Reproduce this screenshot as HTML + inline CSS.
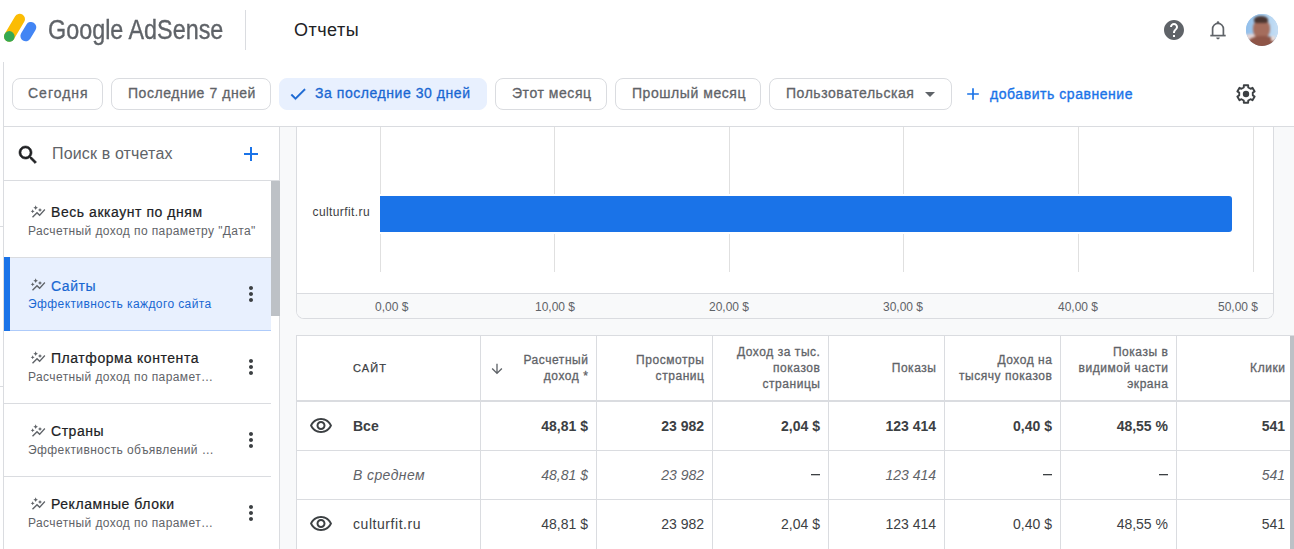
<!DOCTYPE html>
<html><head><meta charset="utf-8">
<style>
*{box-sizing:border-box;margin:0;padding:0}
html,body{width:1294px;height:549px;overflow:hidden;background:#fff;font-family:"Liberation Sans",sans-serif;color:#3c4043}
.a{position:absolute}
.t{position:absolute;white-space:nowrap;line-height:1}
svg{display:block}
.chip{position:absolute;top:78px;height:32px;border:1px solid #dadce0;border-radius:8px;background:#fff}
.chip .t{top:7px;font-size:14px;letter-spacing:0.55px;-webkit-text-stroke-width:0.3px;color:#5f6368}
.vline{position:absolute;width:1px;background:#dadce0}
.hline{position:absolute;height:1px;background:#dadce0}
</style></head><body>

<!-- header -->
<div class="a" style="left:0;top:0;width:1294px;height:62px;background:#fff"></div>
<svg class="a" style="left:0;top:0" width="44" height="50" viewBox="0 0 44 50">
  <line x1="9.3" y1="36.4" x2="19.7" y2="19.1" stroke="#fbbc04" stroke-width="10.6" stroke-linecap="round"/>
  <line x1="25.7" y1="36" x2="31" y2="27.2" stroke="#4285f4" stroke-width="10.6" stroke-linecap="round"/>
  <circle cx="9.3" cy="36.4" r="5.3" fill="#34a853"/>
</svg>
<div class="t" style="left:48px;top:17px;font-size:27px;color:#5f6368;-webkit-text-stroke:0.35px #5f6368;transform:scaleX(0.865);transform-origin:0 0">Google AdSense</div>
<div class="vline" style="left:245px;top:10px;height:40px"></div>
<div class="t" style="left:294px;top:21px;font-size:18px;letter-spacing:0.5px;color:#202124">Отчеты</div>

<!-- help -->
<svg class="a" style="left:1162px;top:18px" width="24" height="24" viewBox="0 0 24 24"><path fill="#5f6368" d="M12 2C6.48 2 2 6.48 2 12s4.48 10 10 10 10-4.48 10-10S17.52 2 12 2zm1 17h-2v-2h2v2zm2.07-7.75l-.9.92C13.45 12.9 13 13.5 13 15h-2v-.5c0-1.1.45-2.1 1.170-2.83l1.24-1.26c.37-.36.59-.86.59-1.41 0-1.1-.9-2-2-2s-2 .9-2 2H8c0-2.21 1.79-4 4-4s4 1.79 4 4c0 .88-.36 1.68-.93 2.25z"/></svg>
<!-- bell -->
<svg class="a" style="left:1206px;top:18px" width="24" height="24" viewBox="0 0 24 24"><g fill="none" stroke="#5f6368" stroke-width="1.7"><path d="M4.3 17.6H19.7"/><path d="M6.6 17.6V10.8A5.4 5.4 0 0 1 17.4 10.8V17.6"/></g><circle cx="12" cy="4.6" r="1.3" fill="#5f6368"/><path d="M10.2 19.6h3.6a1.8 1.8 0 0 1-3.6 0z" fill="#5f6368"/></svg>
<!-- avatar -->
<div class="a" style="left:1246px;top:14px;width:32px;height:32px;border-radius:50%;overflow:hidden;background:#a9cdee">
  <div class="a" style="left:-4px;top:-4px;width:40px;height:40px;filter:blur(0.9px)">
    <div class="a" style="left:0;top:0;width:40px;height:30px;background:linear-gradient(90deg,#8dbbe9,#a8cff0 50%,#cfe3f6)"></div>
    <div class="a" style="left:2px;top:24px;width:14px;height:10px;background:#e3d3d3;border-radius:40%"></div>
    <div class="a" style="left:11px;top:9px;width:17px;height:20px;border-radius:45% 45% 45% 45%;background:#a56d5d"></div>
    <div class="a" style="left:12px;top:6px;width:14px;height:7px;border-radius:50% 50% 30% 30%;background:#4b3530"></div>
    <div class="a" style="left:6px;top:26px;width:29px;height:16px;border-radius:45% 45% 0 0;background:#8e5547"></div>
    <div class="a" style="left:29px;top:26px;width:4px;height:5px;background:#e8dcd9"></div>
  </div>
</div>
<!-- left border of content -->
<div class="hline" style="left:0;top:226px;width:3px"></div>
<div class="hline" style="left:0;top:386px;width:3px"></div>
<div class="vline" style="left:3px;top:62px;height:487px"></div>

<!-- chips -->
<div class="chip" style="left:12px;width:91px"><div class="t" style="left:15px;letter-spacing:1px">Сегодня</div></div>
<div class="chip" style="left:111px;width:160px"><div class="t" style="left:16px">Последние 7 дней</div></div>
<div class="chip" style="left:279px;width:208px;border-color:#e8f0fe;background:#e8f0fe">
  <svg class="a" style="left:8px;top:5px" width="20" height="20" viewBox="0 0 24 24"><path fill="#1967d2" stroke="#1967d2" stroke-width="0.5" d="M9 16.17L4.83 12l-1.42 1.41L9 19 21 7l-1.41-1.41z"/></svg>
  <div class="t" style="left:35px;color:#1967d2">За последние 30 дней</div>
</div>
<div class="chip" style="left:495px;width:112px"><div class="t" style="left:16px">Этот месяц</div></div>
<div class="chip" style="left:615px;width:146px"><div class="t" style="left:16px">Прошлый месяц</div></div>
<div class="chip" style="left:769px;width:183px"><div class="t" style="left:16px">Пользовательская</div>
  <svg class="a" style="left:148px;top:3px" width="24" height="24" viewBox="0 0 24 24"><path fill="#5f6368" d="M7 10l5 5 5-5z"/></svg>
</div>
<svg class="a" style="left:963px;top:84px" width="20" height="20" viewBox="0 0 24 24"><path fill="#1a73e8" d="M19 13h-6v6h-2v-6H5v-2h6V5h2v6h6v2z"/></svg>
<div class="t" style="left:990px;top:87px;font-size:14px;letter-spacing:0.55px;-webkit-text-stroke-width:0.35px;color:#1a73e8">добавить сравнение</div>
<!-- gear -->
<svg class="a" style="left:1234px;top:82px" width="24" height="24" viewBox="0 0 24 24"><path fill="none" stroke="#3c4043" stroke-width="1.9" stroke-linejoin="round" d="M9.75 5.48 L9.82 3.27 L14.18 3.27 L14.25 5.48 L16.53 6.79 L18.47 5.75 L20.65 9.52 L18.77 10.68 L18.77 13.32 L20.65 14.48 L18.47 18.25 L16.53 17.21 L14.25 18.52 L14.18 20.73 L9.82 20.73 L9.75 18.52 L7.47 17.21 L5.53 18.25 L3.35 14.48 L5.23 13.32 L5.23 10.68 L3.35 9.52 L5.53 5.75 L7.47 6.79Z"/><circle cx="12" cy="12" r="3.2" fill="#3c4043"/></svg>

<div class="hline" style="left:3px;top:126px;width:1291px"></div>

<!-- main bg -->
<div class="a" style="left:280px;top:127px;width:1014px;height:422px;background:#f8f9fa"></div>

<!-- SIDEBAR -->
<div class="a" id="sidebar" style="left:4px;top:127px;width:275px;height:422px;background:#fff"></div>
<div class="vline" style="left:279px;top:127px;height:422px"></div>

<!-- search -->
<svg class="a" style="left:16px;top:143px" width="24" height="24" viewBox="0 0 24 24"><path fill="#202124" stroke="#202124" stroke-width="0.6" d="M15.5 14h-.79l-.28-.27C15.41 12.59 16 11.11 16 9.5 16 5.910 13.09 3 9.5 3S3 5.91 3 9.5 5.91 16 9.5 16c1.61 0 3.09-.59 4.23-1.57l.27.28v.79l5 4.99L20.490 19l-4.99-5zm-6 0C7.01 14 5 11.99 5 9.5S7.01 5 9.5 5 14 7.01 14 9.5 11.99 14 9.5 14z"/></svg>
<div class="t" style="left:52px;top:146px;font-size:16px;letter-spacing:0.15px;color:#5f6368">Поиск в отчетах</div>
<svg class="a" style="left:239px;top:142px" width="24" height="24" viewBox="0 0 24 24"><path fill="#1a73e8" d="M19 13h-6v6h-2v-6H5v-2h6V5h2v6h6v2z"/></svg>
<div class="hline" style="left:4px;top:180px;width:275px"></div>

<!-- items -->
<div class="hline" style="left:4px;top:257px;width:267px"></div>
<div class="a" style="left:4px;top:258px;width:267px;height:72px;background:#e8f0fe"></div>
<div class="a" style="left:4px;top:330px;width:267px;height:1px;background:#aecbfa"></div>
<div class="a" style="left:4px;top:257px;width:6px;height:74px;background:#1a73e8"></div>
<div class="hline" style="left:4px;top:403px;width:267px"></div>
<div class="hline" style="left:4px;top:476px;width:267px"></div>
<div class="a" style="left:271px;top:181px;width:9px;height:135px;background:#bdc1c6"></div>

<svg class="a ic" style="left:30px;top:204px" width="16" height="16" viewBox="0 0 24 24"><path fill="#5f6368" d="M14.06 9.94 12 9l2.06-.94L15 6l.94 2.06L18 9l-2.06.94L15 12l-.94-2.06zM4 14l.94-2.06L7 11l-2.06-.94L4 8l-.94 2.06L1 11l2.06.94L4 14zm4.5-5 1.09-2.41L12 5.5 9.59 4.41 8.5 2 7.41 4.41 5 5.5l2.41 1.09L8.5 9zm-4 11.5 6-6.01 4 4L23 8.93l-1.41-1.41-7.09 7.970-4-4L3 19l1.5 1.5z"/></svg>
<div class="t" style="left:51px;top:205px;font-size:14px;letter-spacing:0.55px;-webkit-text-stroke-width:0.2px;color:#202124">Весь аккаунт по дням</div>
<div class="t" style="left:28px;top:225px;font-size:12px;letter-spacing:0.4px;color:#5f6368">Расчетный доход по параметру "Дата"</div>

<svg class="a ic" style="left:30px;top:277px" width="16" height="16" viewBox="0 0 24 24"><path fill="#5f6368" d="M14.06 9.94 12 9l2.06-.94L15 6l.94 2.06L18 9l-2.06.94L15 12l-.94-2.06zM4 14l.94-2.06L7 11l-2.06-.94L4 8l-.94 2.06L1 11l2.06.94L4 14zm4.5-5 1.09-2.41L12 5.5 9.59 4.41 8.5 2 7.41 4.41 5 5.5l2.41 1.09L8.5 9zm-4 11.5 6-6.01 4 4L23 8.93l-1.41-1.41-7.09 7.970-4-4L3 19l1.5 1.5z"/></svg>
<div class="t" style="left:51px;top:279px;font-size:14px;letter-spacing:0.55px;-webkit-text-stroke-width:0.2px;color:#1967d2">Сайты</div>
<div class="t" style="left:28px;top:298px;font-size:12px;letter-spacing:0.4px;color:#1967d2">Эффективность каждого сайта</div>
<svg class="a" style="left:239px;top:282px" width="24" height="24" viewBox="0 0 24 24"><path fill="#3c4043" d="M12 8c1.1 0 2-.9 2-2s-.9-2-2-2-2 .9-2 2 .9 2 2 2zm0 2c-1.1 0-2 .9-2 2s.9 2 2 2 2-.9 2-2-.9-2-2-2zm0 6c-1.1 0-2 .9-2 2s.9 2 2 2 2-.9 2-2-.9-2-2-2z"/></svg>

<svg class="a ic" style="left:30px;top:350px" width="16" height="16" viewBox="0 0 24 24"><path fill="#5f6368" d="M14.06 9.94 12 9l2.06-.94L15 6l.94 2.06L18 9l-2.06.94L15 12l-.94-2.06zM4 14l.94-2.06L7 11l-2.06-.94L4 8l-.94 2.06L1 11l2.06.94L4 14zm4.5-5 1.09-2.41L12 5.5 9.59 4.41 8.5 2 7.41 4.41 5 5.5l2.41 1.09L8.5 9zm-4 11.5 6-6.01 4 4L23 8.93l-1.41-1.41-7.09 7.970-4-4L3 19l1.5 1.5z"/></svg>
<div class="t" style="left:51px;top:351px;font-size:14px;letter-spacing:0.55px;-webkit-text-stroke-width:0.2px;color:#202124">Платформа контента</div>
<div class="t" style="left:28px;top:371px;font-size:12px;letter-spacing:0.4px;color:#5f6368">Расчетный доход по парамет…</div>
<svg class="a" style="left:239px;top:355px" width="24" height="24" viewBox="0 0 24 24"><path fill="#3c4043" d="M12 8c1.1 0 2-.9 2-2s-.9-2-2-2-2 .9-2 2 .9 2 2 2zm0 2c-1.1 0-2 .9-2 2s.9 2 2 2 2-.9 2-2-.9-2-2-2zm0 6c-1.1 0-2 .9-2 2s.9 2 2 2 2-.9 2-2-.9-2-2-2z"/></svg>

<svg class="a ic" style="left:30px;top:423px" width="16" height="16" viewBox="0 0 24 24"><path fill="#5f6368" d="M14.06 9.94 12 9l2.06-.94L15 6l.94 2.06L18 9l-2.06.94L15 12l-.94-2.06zM4 14l.94-2.06L7 11l-2.06-.94L4 8l-.94 2.06L1 11l2.06.94L4 14zm4.5-5 1.09-2.41L12 5.5 9.59 4.41 8.5 2 7.41 4.41 5 5.5l2.41 1.09L8.5 9zm-4 11.5 6-6.01 4 4L23 8.93l-1.41-1.41-7.09 7.970-4-4L3 19l1.5 1.5z"/></svg>
<div class="t" style="left:51px;top:424px;font-size:14px;letter-spacing:0.55px;-webkit-text-stroke-width:0.2px;color:#202124">Страны</div>
<div class="t" style="left:28px;top:444px;font-size:12px;letter-spacing:0.4px;color:#5f6368">Эффективность объявлений …</div>
<svg class="a" style="left:239px;top:428px" width="24" height="24" viewBox="0 0 24 24"><path fill="#3c4043" d="M12 8c1.1 0 2-.9 2-2s-.9-2-2-2-2 .9-2 2 .9 2 2 2zm0 2c-1.1 0-2 .9-2 2s.9 2 2 2 2-.9 2-2-.9-2-2-2zm0 6c-1.1 0-2 .9-2 2s.9 2 2 2 2-.9 2-2-.9-2-2-2z"/></svg>

<svg class="a ic" style="left:30px;top:496px" width="16" height="16" viewBox="0 0 24 24"><path fill="#5f6368" d="M14.06 9.94 12 9l2.06-.94L15 6l.94 2.06L18 9l-2.06.94L15 12l-.94-2.06zM4 14l.94-2.06L7 11l-2.06-.94L4 8l-.94 2.06L1 11l2.06.94L4 14zm4.5-5 1.09-2.41L12 5.5 9.59 4.41 8.5 2 7.41 4.41 5 5.5l2.41 1.09L8.5 9zm-4 11.5 6-6.01 4 4L23 8.93l-1.41-1.41-7.09 7.970-4-4L3 19l1.5 1.5z"/></svg>
<div class="t" style="left:51px;top:497px;font-size:14px;letter-spacing:0.55px;-webkit-text-stroke-width:0.2px;color:#202124">Рекламные блоки</div>
<div class="t" style="left:28px;top:517px;font-size:12px;letter-spacing:0.4px;color:#5f6368">Расчетный доход по парамет…</div>
<svg class="a" style="left:239px;top:501px" width="24" height="24" viewBox="0 0 24 24"><path fill="#3c4043" d="M12 8c1.1 0 2-.9 2-2s-.9-2-2-2-2 .9-2 2 .9 2 2 2zm0 2c-1.1 0-2 .9-2 2s.9 2 2 2 2-.9 2-2-.9-2-2-2zm0 6c-1.1 0-2 .9-2 2s.9 2 2 2 2-.9 2-2-.9-2-2-2z"/></svg>

<!-- CHART CARD -->
<div class="a" style="left:296px;top:127px;width:978px;height:192px;background:#fff;border:1px solid #dadce0;border-top:none;border-radius:0 0 8px 8px;overflow:hidden">
  <div class="a" style="left:0;top:166px;width:976px;height:25px;background:#f8f9fa;border-top:1px solid #dadce0"></div>
</div>
<div class="vline" style="left:380px;top:127px;height:145px;background:#e0e0e0"></div>
<div class="vline" style="left:554px;top:127px;height:145px;background:#e0e0e0"></div>
<div class="vline" style="left:729px;top:127px;height:145px;background:#e0e0e0"></div>
<div class="vline" style="left:903px;top:127px;height:145px;background:#e0e0e0"></div>
<div class="vline" style="left:1078px;top:127px;height:145px;background:#e0e0e0"></div>
<div class="vline" style="left:1253px;top:127px;height:145px;background:#e0e0e0"></div>
<div class="a" style="left:379px;top:194px;width:855px;height:40px;background:#fff"></div>
<div class="a" style="left:380px;top:196px;width:852px;height:36px;background:#1a73e8;border-radius:0 3px 3px 0"></div>
<div class="t" style="right:924px;top:206px;font-size:12px;letter-spacing:0.4px;color:#3c4043">culturfit.ru</div>
<div class="t" style="left:375px;top:301px;font-size:12px;color:#5f6368">0,00 $</div>
<div class="t" style="left:535px;top:301px;font-size:12px;color:#5f6368">10,00 $</div>
<div class="t" style="left:709px;top:301px;font-size:12px;color:#5f6368">20,00 $</div>
<div class="t" style="left:883px;top:301px;font-size:12px;color:#5f6368">30,00 $</div>
<div class="t" style="left:1058px;top:301px;font-size:12px;color:#5f6368">40,00 $</div>
<div class="t" style="left:1218px;top:301px;font-size:12px;color:#5f6368">50,00 $</div>

<!-- TABLE -->
<div class="a" style="left:296px;top:335px;width:998px;height:214px;background:#fff;border:1px solid #dadce0;border-bottom:none;border-right:none"></div>
<div class="a" style="left:297px;top:400px;width:993px;height:2px;background:#dadce0"></div>
<div class="hline" style="left:297px;top:450px;width:993px"></div>
<div class="hline" style="left:297px;top:499px;width:993px"></div>
<div class="vline" style="left:480px;top:336px;height:213px"></div>
<div class="vline" style="left:596px;top:336px;height:213px"></div>
<div class="vline" style="left:712px;top:336px;height:213px"></div>
<div class="vline" style="left:828px;top:336px;height:213px"></div>
<div class="vline" style="left:944px;top:336px;height:213px"></div>
<div class="vline" style="left:1060px;top:336px;height:213px"></div>
<div class="vline" style="left:1176px;top:336px;height:213px"></div>
<div class="a" style="left:1290px;top:336px;width:4px;height:213px;background:#bdc1c6"></div>
<div class="a hd" style="right:705.5px;top:352px;text-align:right;font-size:12px;line-height:16px;letter-spacing:0.55px;-webkit-text-stroke-width:0.3px;color:#5f6368;white-space:nowrap">Расчетный<br>доход *</div>
<div class="a hd" style="right:589.5px;top:352px;text-align:right;font-size:12px;line-height:16px;letter-spacing:0.55px;-webkit-text-stroke-width:0.3px;color:#5f6368;white-space:nowrap">Просмотры<br>страниц</div>
<div class="a hd" style="right:473.5px;top:344px;text-align:right;font-size:12px;line-height:16px;letter-spacing:0.55px;-webkit-text-stroke-width:0.3px;color:#5f6368;white-space:nowrap">Доход за тыс.<br>показов<br>страницы</div>
<div class="a hd" style="right:357.5px;top:360px;text-align:right;font-size:12px;line-height:16px;letter-spacing:0.55px;-webkit-text-stroke-width:0.3px;color:#5f6368;white-space:nowrap">Показы</div>
<div class="a hd" style="right:241.5px;top:352px;text-align:right;font-size:12px;line-height:16px;letter-spacing:0.55px;-webkit-text-stroke-width:0.3px;color:#5f6368;white-space:nowrap">Доход на<br>тысячу показов</div>
<div class="a hd" style="right:125.5px;top:344px;text-align:right;font-size:12px;line-height:16px;letter-spacing:0.55px;-webkit-text-stroke-width:0.3px;color:#5f6368;white-space:nowrap">Показы в<br>видимой части<br>экрана</div>
<div class="a hd" style="right:8.5px;top:360px;text-align:right;font-size:12px;line-height:16px;letter-spacing:0.55px;-webkit-text-stroke-width:0.3px;color:#5f6368;white-space:nowrap">Клики</div>
<div class="t" style="left:353px;top:363px;font-size:11px;letter-spacing:1.1px;-webkit-text-stroke:0.25px #3c4043;color:#3c4043">САЙТ</div>
<svg class="a" style="left:489px;top:361px" width="16" height="16" viewBox="0 0 24 24"><path fill="#5f6368" d="M20 12l-1.41-1.41L13 16.17V4h-2v12.17l-5.58-5.59L4 12l8 8 8-8z"/></svg>
<div class="t" style="left:353px;top:419px;font-size:14px;font-weight:bold;font-style:normal;color:#3c4043">Все</div>
<div class="t" style="right:706px;top:419px;font-size:14px;font-weight:bold;font-style:normal;color:#3c4043">48,81 $</div>
<div class="t" style="right:590px;top:419px;font-size:14px;font-weight:bold;font-style:normal;color:#3c4043">23 982</div>
<div class="t" style="right:474px;top:419px;font-size:14px;font-weight:bold;font-style:normal;color:#3c4043">2,04 $</div>
<div class="t" style="right:358px;top:419px;font-size:14px;font-weight:bold;font-style:normal;color:#3c4043">123 414</div>
<div class="t" style="right:242px;top:419px;font-size:14px;font-weight:bold;font-style:normal;color:#3c4043">0,40 $</div>
<div class="t" style="right:126px;top:419px;font-size:14px;font-weight:bold;font-style:normal;color:#3c4043">48,55 %</div>
<div class="t" style="right:9px;top:419px;font-size:14px;font-weight:bold;font-style:normal;color:#3c4043">541</div>
<div class="t" style="left:353px;top:468px;font-size:14px;font-weight:normal;font-style:italic;letter-spacing:0.4px;color:#5f6368">В среднем</div>
<div class="t" style="right:706px;top:468px;font-size:14px;font-weight:normal;font-style:italic;color:#5f6368">48,81 $</div>
<div class="t" style="right:590px;top:468px;font-size:14px;font-weight:normal;font-style:italic;color:#5f6368">23 982</div>
<div class="a" style="left:811px;top:474px;width:9px;height:1px;background:#3c4043;box-shadow:0 1px 0 rgba(60,64,67,0.3)"></div>
<div class="t" style="right:358px;top:468px;font-size:14px;font-weight:normal;font-style:italic;color:#5f6368">123 414</div>
<div class="a" style="left:1043px;top:474px;width:9px;height:1px;background:#3c4043;box-shadow:0 1px 0 rgba(60,64,67,0.3)"></div>
<div class="a" style="left:1159px;top:474px;width:9px;height:1px;background:#3c4043;box-shadow:0 1px 0 rgba(60,64,67,0.3)"></div>
<div class="t" style="right:9px;top:468px;font-size:14px;font-weight:normal;font-style:italic;color:#5f6368">541</div>
<div class="t" style="left:353px;top:517px;font-size:14px;font-weight:normal;font-style:normal;letter-spacing:0.55px;color:#3c4043">culturfit.ru</div>
<div class="t" style="right:706px;top:517px;font-size:14px;font-weight:normal;font-style:normal;color:#3c4043">48,81 $</div>
<div class="t" style="right:590px;top:517px;font-size:14px;font-weight:normal;font-style:normal;color:#3c4043">23 982</div>
<div class="t" style="right:474px;top:517px;font-size:14px;font-weight:normal;font-style:normal;color:#3c4043">2,04 $</div>
<div class="t" style="right:358px;top:517px;font-size:14px;font-weight:normal;font-style:normal;color:#3c4043">123 414</div>
<div class="t" style="right:242px;top:517px;font-size:14px;font-weight:normal;font-style:normal;color:#3c4043">0,40 $</div>
<div class="t" style="right:126px;top:517px;font-size:14px;font-weight:normal;font-style:normal;color:#3c4043">48,55 %</div>
<div class="t" style="right:9px;top:517px;font-size:14px;font-weight:normal;font-style:normal;color:#3c4043">541</div>
<svg class="a" style="left:309px;top:414px" width="24" height="24" viewBox="0 0 24 24"><path fill="#3c4043" d="M12 6c3.79 0 7.17 2.13 8.82 5.5C19.170 14.87 15.79 17 12 17s-7.17-2.13-8.82-5.5C4.83 8.13 8.21 6 12 6m0-2C7 4 2.73 7.11 1 11.5 2.73 15.89 7 19 12 19s9.27-3.11 11-7.5C21.27 7.11 17 4 12 4zm0 5c1.38 0 2.5 1.12 2.5 2.5S13.38 14 12 14s-2.5-1.12-2.5-2.5S10.62 9 12 9m0-2c-2.48 0-4.5 2.02-4.5 4.5S9.52 16 12 16s4.5-2.02 4.5-4.5S14.48 7 12 7z"/></svg>
<svg class="a" style="left:309px;top:512px" width="24" height="24" viewBox="0 0 24 24"><path fill="#3c4043" d="M12 6c3.79 0 7.17 2.13 8.82 5.5C19.170 14.87 15.79 17 12 17s-7.17-2.13-8.82-5.5C4.83 8.13 8.21 6 12 6m0-2C7 4 2.73 7.11 1 11.5 2.73 15.89 7 19 12 19s9.27-3.11 11-7.5C21.27 7.11 17 4 12 4zm0 5c1.38 0 2.5 1.12 2.5 2.5S13.38 14 12 14s-2.5-1.12-2.5-2.5S10.62 9 12 9m0-2c-2.48 0-4.5 2.02-4.5 4.5S9.52 16 12 16s4.5-2.02 4.5-4.5S14.48 7 12 7z"/></svg>
</body></html>
